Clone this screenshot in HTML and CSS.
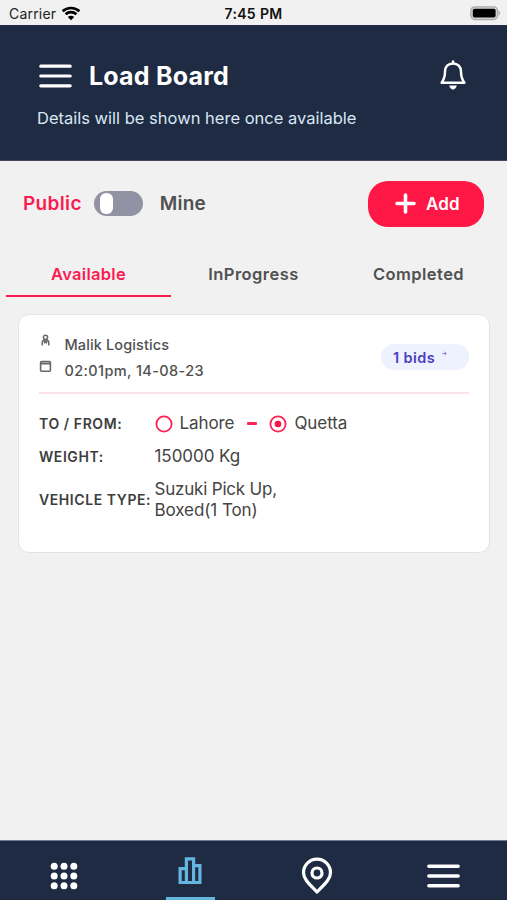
FILE: index.html
```html
<!DOCTYPE html>
<html lang="en">
<head>
<meta charset="utf-8">
<title>Load Board</title>
<link rel="stylesheet" href="styles.css">
</head>
<body>
<div class="status">
  <div class="carrier"><span>Carrier</span>
    <svg width="20" height="15" viewBox="0 0 20 15" fill="none" stroke="#000" stroke-width="2.7"><path d="M1.6 5.2C6.2.9 13.8.9 18.4 5.2M4.6 8.3c3-2.8 7.8-2.8 10.8 0"/><path d="M10 14.2 6.8 11c1.8-1.6 4.6-1.6 6.4 0z" fill="#000" stroke="none"/></svg>
  </div>
  <div class="clock">7:45 PM</div>
  <svg class="battery" width="31" height="15" viewBox="0 0 31 15"><rect x=".8" y=".8" width="26.8" height="12.8" rx="4" fill="#d2d2d2" stroke="#aaa" stroke-width="1.2"/><rect x="2.8" y="2.8" width="22.8" height="8.8" rx="1.8" fill="#000"/><path d="M28.6 4.6c2 1 2 4.2 0 5.2z" fill="#aaa"/></svg>
</div>
<header class="header">
  <div class="title-row">
    <svg width="33" height="24" viewBox="0 0 33 24" stroke="#fff" stroke-width="3.2" stroke-linecap="round"><path d="M1.8 2.2h29.4M1.8 12h29.4M1.8 21.8h29.4"/></svg>
    <h1>Load Board</h1>
    <svg class="bell" width="28" height="30" viewBox="0 0 28 30" fill="none" stroke="#fff" stroke-width="2.5" stroke-linejoin="round" stroke-linecap="round"><path d="M14 3.4c-4.8 0-8 3.4-8 8.3 0 6-1.2 8-3.4 11h22.800c-2.200-3-3.400-5-3.400-11 0-4.900-3.200-8.300-8-8.300z"/><path d="M14 1.600v1.400"/><path d="M10.200 25.600h7.600c-.5 2.400-2 3.900-3.800 3.900s-3.300-1.500-3.800-3.900z" fill="#fff" stroke="none"/></svg>
  </div>
  <p class="subtitle">Details will be shown here once available</p>
</header>
<main>
  <div class="controls">
    <span class="public">Public</span>
    <span class="switch"><span class="knob"></span></span>
    <span class="mine">Mine</span>
    <button class="add"><svg width="21" height="21" viewBox="0 0 21 21" stroke="#fff" stroke-width="3.600" stroke-linecap="round"><path d="M10.500 2v17M2 10.500h17"/></svg><span>Add</span></button>
  </div>
  <nav class="tabs"><div class="tab active">Available</div><div class="tab">InProgress</div><div class="tab">Completed</div></nav>
  <article class="card">
    <div class="card-head">
      <div class="meta">
        <div class="meta-row"><svg width="13" height="13" viewBox="0 0 13 13" fill="none" stroke="#686868" stroke-width="1.500"><circle cx="6.500" cy="3.300" r="2.100"/><path d="M3.200 11.500V9.200c0-4.500 6.600-4.500 6.600 0v2.300M5 6.600l3 2.700M8 6.600 5 9.300"/></svg><span>Malik Logistics</span></div>
        <div class="meta-row date"><svg width="13" height="13" viewBox="0 0 13 13" fill="none" stroke="#686868" stroke-width="1.600"><rect x="1.600" y="1.500" width="9.800" height="9.800" rx="1"/><path d="M2 3.500h9" stroke-width="2"/></svg><span>02:01pm, 14-08-23</span></div>
      </div>
      <div class="bids"><span>1 bids</span><svg width="5" height="5" viewBox="0 0 5 5" fill="none" stroke="#8580dd" stroke-width="1"><path d="M.5 2.500h3.500M2.500.7l1.700 1.800-1.700 1.800"/></svg></div>
    </div>
    <div class="details">
      <div class="row"><span class="label">TO / FROM:</span><div class="value route">
        <svg width="18" height="18" viewBox="0 0 18 18" fill="none" stroke="#fb2456" stroke-width="1.800"><circle cx="9" cy="9" r="7.600"/></svg><span>Lahore</span><i class="dash"></i>
        <svg width="18" height="18" viewBox="0 0 18 18" fill="none" stroke="#fb2456" stroke-width="1.800"><circle cx="9" cy="9" r="7.600"/><circle cx="9" cy="9" r="3.300" fill="#fb1646" stroke="none"/></svg><span>Quetta</span></div></div>
      <div class="row"><span class="label">WEIGHT:</span><div class="value weight">150000 Kg</div></div>
      <div class="row tall"><span class="label">VEHICLE TYPE:</span><div class="value"><span class="vehicle">Suzuki Pick Up,</span><br><span>Boxed(1 Ton)</span></div></div>
    </div>
  </article>
</main>
<footer class="bottom">
  <div class="item grid"><svg width="28" height="28" viewBox="0 0 28 28" fill="#fff"><circle cx="4.200" cy="4.200" r="3.500"/><circle cx="14" cy="4.200" r="3.500"/><circle cx="23.800" cy="4.200" r="3.500"/><circle cx="4.200" cy="14" r="3.500"/><circle cx="14" cy="14" r="3.500"/><circle cx="23.800" cy="14" r="3.500"/><circle cx="4.200" cy="23.800" r="3.500"/><circle cx="14" cy="23.800" r="3.500"/><circle cx="23.800" cy="23.800" r="3.500"/></svg></div>
  <div class="item current"><svg width="24" height="28" viewBox="0 0 24 28" fill="none" stroke="#66b5e1" stroke-width="3.200"><path d="M8.400 25.500V1.900h7.200v23.600M8.400 11.700H2.100v13.800h19.800V8.700h-6.300"/></svg></div>
  <div class="item"><svg width="32" height="38" viewBox="0 0 32 38" fill="none" stroke="#fff" stroke-width="3.200" stroke-linejoin="round"><path d="M16 35C8.500 27.200 2.500 22.300 2.500 15.600a13.500 13.500 0 0 1 27 0C29.500 22.300 23.500 27.200 16 35z"/><circle cx="16" cy="16" r="5"/></svg></div>
  <div class="item"><svg width="33" height="24" viewBox="0 0 33 24" stroke="#fff" stroke-width="3.600" stroke-linecap="round"><path d="M1.900 2.200h29.200M1.900 12h29.200M1.900 21.800h29.200"/></svg></div>
</footer>
</body>
</html>
```
FILE: styles.css
```css
* { box-sizing: border-box; }
body { margin: 0; width: 507px; height: 900px; overflow: hidden; display: flex; flex-direction: column; background: #f1f1f1; color: #444; font-family: Inter, "Liberation Sans", sans-serif; }
svg { display: block; flex: none; }
span { white-space: nowrap; }
.status { height: 25px; flex: none; display: grid; grid-template-columns: 1fr auto 1fr; align-items: center; padding: 2px 6px 0 9px; font-size: 14px; color: #222; }
.carrier { display: flex; gap: 5px; align-items: center; letter-spacing: .2px; }
.clock { font-weight: 600; color: #111; letter-spacing: .35px; margin: 0 2px 0 -1px; }
.battery { justify-self: end; }
.header { height: 136px; flex: none; background: #1e2b42; padding: 30px 40px 0 37px; border-bottom: 1px solid #42485f; }
.title-row { display: flex; align-items: center; height: 41px; padding-left: 2px; }
.title-row h1 { margin: 0 0 0 17px; font-size: 25px; line-height: 30px; font-weight: 700; letter-spacing: .2px; color: #fff; }
.bell { margin: 0 0 2px auto; }
.subtitle { margin: 12px 0 0; font-size: 16.500px; line-height: 20px; color: #d9e6f4; }
main { flex: 1; }
.controls { height: 85px; display: flex; align-items: center; padding: 0 23px; font-size: 19px; font-weight: 600; }
.public { color: #fa1c51; letter-spacing: .35px; }
.switch { width: 49px; height: 25px; margin-left: 12px; padding: 2px 6px; border-radius: 13px; background: #9192a3; }
.knob { display: block; width: 13px; height: 21px; border-radius: 6px; background: #fff; }
.mine { margin-left: 17px; color: #505050; letter-spacing: .15px; }
.add { margin-left: auto; width: 116px; height: 46px; border: 0; border-radius: 20px; background: #ff1745; color: #fff; display: flex; align-items: center; padding: 0 0 0 27px; gap: 10px; font: 600 17px Inter, sans-serif; letter-spacing: .2px; }
.tabs { height: 51px; margin: 0 6px; display: grid; grid-template-columns: repeat(3, 1fr); font-size: 16.500px; font-weight: 600; letter-spacing: .45px; text-align: center; color: #505050; }
.tab { padding-top: 18px; line-height: 20px; }
.tab.active { color: #fa1c51; border-bottom: 2px solid #fa1c51; letter-spacing: .3px; }
.card { margin: 17px 17px 0 18px; height: 239px; background: #fff; border: 1px solid #e3e3e3; border-radius: 11px; padding: 18px 20px 0; }
.card-head { display: flex; justify-content: space-between; height: 61px; border-bottom: 2px solid #fde3e9; }
.meta-row { display: flex; height: 26px; gap: 12.500px; font-size: 14.500px; line-height: 23px; font-weight: 500; color: #505050; letter-spacing: .12px; }
.date { letter-spacing: .38px; }
.meta-row svg { margin-top: 1px; }
.bids { margin-top: 11px; width: 88px; height: 26px; border-radius: 13px; background: #eef2ff; color: #4a40bd; font-size: 14.500px; font-weight: 600; letter-spacing: .4px; display: flex; align-items: center; gap: 7px; padding-left: 12px; }
.bids svg { margin-bottom: 8px; }
.details { padding-top: 13px; }
.row { height: 33px; display: flex; align-items: center; }
.row.tall { height: 53px; }
.label { width: 115.500px; font-size: 14px; font-weight: 600; color: #3d3d3d; letter-spacing: .58px; }
.value { font-size: 17px; line-height: 21px; color: #444; letter-spacing: -.08px; }
.vehicle { letter-spacing: -.2px; }
.weight { letter-spacing: -.05px; }
.route { display: flex; align-items: center; }
.route span { margin-left: 7px; }
.dash { width: 10px; height: 3px; margin: 0 12.500px; background: #fb2456; border-radius: 1px; }
.bottom { height: 60px; flex: none; background: #1e2b42; border-top: 1px solid #6c7d92; display: grid; grid-template-columns: repeat(4, 1fr); }
.item { display: flex; justify-content: center; align-items: center; padding-top: 10px; }
.item.grid { padding-left: 2px; }
.item.current { width: 49px; justify-self: center; padding: 4px 0 0; border-bottom: 3px solid #66b5e1; }
```
